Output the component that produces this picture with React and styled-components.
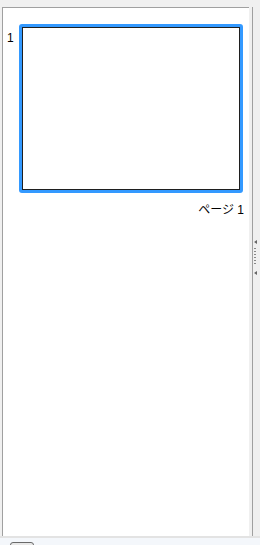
import React from 'react';
import styled, { createGlobalStyle } from 'styled-components';

const GlobalStyle = createGlobalStyle`
  html, body {
    margin: 0;
    padding: 0;
    background: #f0f0f0;
    font-family: "Liberation Sans", "Noto Sans CJK JP", sans-serif;
  }
`;

const Window = styled.div`
  height: 545px;
  width: 260px;
  display: flex;
  flex-direction: column;
  overflow: hidden;
`;

const Main = styled.div`
  flex: 1;
  display: flex;
  padding: 7px 0 0 2px;
  min-height: 0;
`;

const Panel = styled.div`
  width: 247px;
  background: #fff;
  border-left: 1px solid #a0a0a0;
  border-top: 1px solid #a0a0a0;
  padding: 16px 0 0 4px;
  box-sizing: border-box;
`;

const Splitter = styled.div`
  margin-left: 3px;
  width: 6px;
  border-left: 1px solid #a0a0a0;
  display: flex;
  align-items: center;
  justify-content: center;
`;

const Grip = styled.svg`
  display: block;
  margin-top: -28px;
`;

const Row = styled.div`
  display: flex;
  align-items: flex-start;
`;

const Index = styled.div`
  width: 12px;
  font-size: 12px;
  line-height: 14px;
  color: #000;
  padding-top: 7px;
`;

const Thumb = styled.div`
  width: 224px;
  height: 169px;
  box-sizing: border-box;
  border: 3px solid #3399ff;
  border-radius: 3px;
  background: #3399ff;
`;

const ThumbInner = styled.div`
  height: 100%;
  box-sizing: border-box;
  border: 1px solid #1f1f1f;
  background: #fff;
`;

const Caption = styled.div`
  width: 237px;
  text-align: right;
  font-size: 12px;
  line-height: 14px;
  margin-top: 10px;
  color: #000;
`;

const Footer = styled.div`
  height: 9px;
  border-top: 2px solid #e3e3e3;
  background: #f4f7fb;
  box-sizing: border-box;
  padding-left: 10px;
  padding-top: 4px;
`;

const Tab = styled.div`
  width: 24px;
  height: 8px;
  border: 1px solid #6a6a6a;
  border-radius: 3px 3px 0 0;
  background: #e8e8e8;
  box-sizing: border-box;
`;

export default function App() {
  return (
    <>
      <GlobalStyle />
      <Window>
        <Main>
          <Panel>
            <Row>
              <Index>1</Index>
              <Thumb>
                <ThumbInner />
              </Thumb>
            </Row>
            <Caption>ページ 1</Caption>
          </Panel>
          <Splitter>
            <Grip width="4" height="36" viewBox="0 0 4 36">
              <path d="M0 2 L3 0 L3 4 Z" fill="#666" />
              <rect x="0" y="8" width="2" height="1" fill="#888" />
              <rect x="0" y="11" width="2" height="1" fill="#888" />
              <rect x="0" y="14" width="2" height="1" fill="#888" />
              <rect x="0" y="17" width="2" height="1" fill="#888" />
              <rect x="0" y="20" width="2" height="1" fill="#888" />
              <rect x="0" y="23" width="2" height="1" fill="#888" />
              <path d="M0 33 L3 31 L3 35 Z" fill="#666" />
            </Grip>
          </Splitter>
        </Main>
        <Footer>
          <Tab />
        </Footer>
      </Window>
    </>
  );
}
